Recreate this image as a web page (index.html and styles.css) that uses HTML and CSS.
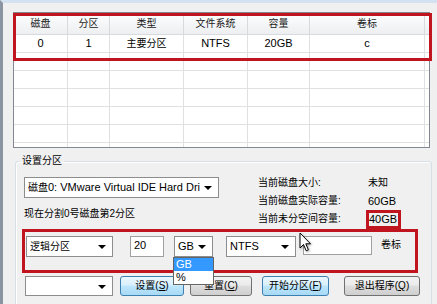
FILE: index.html
```html
<!DOCTYPE html>
<html lang="zh-CN">
<head>
<meta charset="utf-8">
<title>分区工具</title>
<link rel="stylesheet" href="styles.css">
</head>
<body>
<div class="window">
  <div class="grid-wrap">
    <div class="grid-body">
      <div class="row head">
        <div class="zh">磁盘</div><div class="zh">分区</div><div class="zh">类型</div><div class="zh">文件系统</div><div class="zh">容量</div><div class="zh">卷标</div><div></div>
      </div>
      <div class="row">
        <div>0</div><div>1</div><div class="zh">主要分区</div><div>NTFS</div><div>20GB</div><div>c</div><div></div>
      </div>
      <div class="row"><div></div><div></div><div></div><div></div><div></div><div></div><div></div></div>
      <div class="row"><div></div><div></div><div></div><div></div><div></div><div></div><div></div></div>
      <div class="row"><div></div><div></div><div></div><div></div><div></div><div></div><div></div></div>
      <div class="row"><div></div><div></div><div></div><div></div><div></div><div></div><div></div></div>
      <div class="row"><div></div><div></div><div></div><div></div><div></div><div></div><div></div></div>
      <div class="row"><div></div><div></div><div></div><div></div><div></div><div></div><div></div></div>
    </div>
    <div class="mark mark-table"></div>
  </div>

  <fieldset class="group">
    <legend class="zh">设置分区</legend>
    <div class="top-row">
      <div class="left-col">
        <div class="combo disk"><span class="zh">磁盘</span>0: VMware Virtual IDE Hard Dri</div>
        <div class="note zh">现在分割0号磁盘第2分区</div>
      </div>
      <div class="info">
        <div class="zh">当前磁盘大小:</div><div class="zh">未知</div>
        <div class="zh">当前磁盘实际容量:</div><div>60GB</div>
        <div class="zh">当前未分空间容量:</div><div><span class="boxed">40GB</span></div>
      </div>
    </div>

    <div class="edit-row">
      <div class="combo type zh">逻辑分区</div>
      <div class="textbox size">20</div>
      <div class="unit-wrap">
        <div class="combo unit">GB</div>
        <div class="droplist">
          <div class="opt sel">GB</div>
          <div class="opt">%</div>
        </div>
      </div>
      <div class="combo fs">NTFS</div>
      <div class="textbox label"></div>
      <div class="label-text zh">卷标</div>
      <svg class="cursor" width="14" height="21" viewBox="0 0 14 21">
        <path d="M1 1 L1 16 L4.5 12.5 L7.2 18.8 L9.4 17.8 L6.8 11.8 L11.5 11.8 Z" fill="#fff" stroke="#000" stroke-width="1" stroke-linejoin="round"/>
      </svg>
    </div>

    <div class="btn-row">
      <div class="combo blank"></div>
      <button class="btn hot b1"><span class="zh">设置</span>(<u>S</u>)</button>
      <button class="btn b2"><span class="zh">重置</span>(<u>C</u>)</button>
      <button class="btn hot b3"><span class="zh">开始分区</span>(<u>F</u>)</button>
      <button class="btn b4"><span class="zh">退出程序</span>(<u>Q</u>)</button>
    </div>
  </fieldset>
</div>
</body>
</html>
```

FILE: styles.css
```css
* { box-sizing: border-box; }

body {
  margin: 0;
  background: #f0f0f0;
  font-family: "Liberation Sans", "Noto Sans CJK SC", sans-serif;
  font-size: 11px;
  color: #000;
}

.zh { font-size: 10px; }

.window {
  position: relative;
  width: 437px;
  height: 304px;
  overflow: hidden;
  background: #f0f0f0;
  border-top: 3px solid #d3e1f0;
  border-left: 3px solid #8b95a1;
}

/* list view */
.grid-wrap {
  position: relative;
  margin: 9px 0 0 10px;
  width: 417px;
  height: 136px;
  border: 1px solid #828790;
  background: #fff;
}
.grid-body { height: 134px; overflow: hidden; }

.row {
  display: grid;
  grid-template-columns: 54px 42px 74px 64px 62px 115px 1fr;
  height: 18px;
}
.row > div {
  border-right: 1px solid #e0e0e0;
  border-bottom: 1px solid #e0e0e0;
  text-align: center;
  line-height: 17px;
  white-space: nowrap;
}
.row > div:last-child { border-right: 0; }
.row.head {
  height: 22px;
  background: linear-gradient(#ffffff, #f4f5f7 55%, #eceef1);
}
.row.head > div {
  border-color: #d8dadd;
  line-height: 21px;
  color: #1a1a1a;
}

.mark {
  position: absolute;
  border: 3px solid #c0141e;
}
.mark-table {
  left: -1px;
  top: 0;
  width: 419px;
  height: 48px;
}

/* group box */
.group {
  margin: 7px 0 0 12px;
  width: 417px;
  height: 170px;
  min-width: 0;
  padding: 7px 0 0 0;
  border: 1px solid #d5dfe5;
  border-radius: 3px;
  box-shadow: inset 1px 1px 0 #fff;
}
.group legend {
  margin-left: 4px;
  padding: 0 2px;
  line-height: 12px;
}

.top-row {
  display: flex;
  margin-left: 8px;
}
.left-col { width: 195px; }

.combo {
  position: relative;
  height: 21px;
  border: 1px solid #8d8d8d;
  background: #fff;
  padding-left: 3px;
  line-height: 19px;
  white-space: nowrap;
  overflow: hidden;
}
.combo::after {
  content: "";
  position: absolute;
  right: 6px;
  top: 8px;
  border-left: 4px solid transparent;
  border-right: 4px solid transparent;
  border-top: 4px solid #000;
}
.combo.disk { margin-top: 3px; width: 195px; padding-right: 18px; }

.note { margin-top: 9px; line-height: 14px; padding-left: 0; }

.info {
  margin-left: 39px;
  display: grid;
  grid-template-columns: 110px auto;
  grid-auto-rows: 18px;
  line-height: 18px;
}
.boxed {
  display: inline-block;
  margin-left: -2px;
  padding: 0 1px 0 0;
  height: 19px;
  line-height: 13px;
  border: 3px solid #c0141e;
  vertical-align: top;
  position: relative;
  top: 0;
}

/* highlighted edit row */
.edit-row {
  position: relative;
  display: flex;
  align-items: flex-start;
  margin: 1px 0 0 6px;
  width: 396px;
  height: 44px;
  padding: 4px 0 0 1px;
  border: 3px solid #c0141e;
}
.combo.type { width: 87px; }
.textbox {
  height: 21px;
  border: 1px solid #a0a0a0;
  background: #fff;
  padding-left: 3px;
  line-height: 17px;
}
.textbox.size { width: 34px; margin-left: 17px; }
.unit-wrap { position: relative; margin-left: 10px; }
.combo.unit { width: 39px; }
.droplist {
  position: absolute;
  left: -1px;
  top: 21px;
  width: 41px;
  background: #fff;
  border: 1px solid #646464;
  z-index: 2;
}
.opt { height: 13px; line-height: 13px; padding-left: 2px; }
.opt.sel { background: #3399ff; color: #fff; }

.combo.fs { width: 70px; margin-left: 13px; }
.textbox.label { width: 69px; height: 19px; margin-left: 7px; }
.label-text { margin-left: 9px; line-height: 17px; }

.cursor {
  position: absolute;
  left: 274px;
  top: 0;
  filter: drop-shadow(1px 1px 1px rgba(0,0,0,0.35));
}

/* buttons */
.btn-row {
  display: flex;
  margin: 3px 0 0 9px;
}
.combo.blank { width: 88px; height: 20px; }
.btn {
  height: 20px;
  padding: 0;
  border: 1px solid #707070;
  border-radius: 3px;
  background: linear-gradient(#f2f2f2, #ebebeb 45%, #dddddd 50%, #cfcfcf);
  font-family: "Liberation Sans", "Noto Sans CJK SC", sans-serif;
  font-size: 10px;
  color: #000;
  line-height: 18px;
}
.btn.hot {
  border-color: #3c7fb1;
  background: linear-gradient(#eaf6fd, #d9f0fc 45%, #bee6fd 50%, #a7d9f5);
}
.btn.b1 { width: 64px; margin-left: 7px; }
.btn.b2 { width: 62px; margin-left: 6px; }
.btn.b3 { width: 67px; margin-left: 10px; }
.btn.b4 { width: 76px; margin-left: 15px; }
```
